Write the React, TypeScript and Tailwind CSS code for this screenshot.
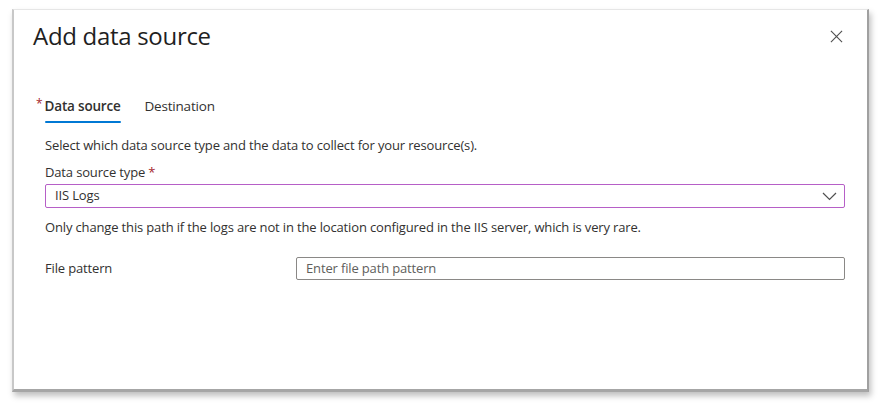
import React from "react";

export default function App() {
  const font = { fontFamily: '"Open Sans", "Noto Sans", sans-serif' };
  return (
    <div className="w-[882px] h-[408px] bg-white pt-[9px] pl-[12px]" style={font}>
      <div className="w-[857px] h-[383px] bg-white border-t border-t-[#e6e6e6] border-l-2 border-l-[#c8c8c8] border-r-2 border-r-[#a0a0a0] border-b-[3px] border-b-[#a6a6a6] shadow-[2px_4px_6px_rgba(0,0,0,0.25)] flex flex-col">
        <div className="flex items-start justify-between pl-[19px] pr-[24px] pt-[11px]">
          <h1 className="text-[24px] leading-[30px] text-[#1f1f1f] tracking-[-0.3px]">Add data source</h1>
          <button className="mt-[9px] text-[#505050]" title="Close">
            <svg width="13" height="13" viewBox="0 0 14 14" fill="none" stroke="currentColor" strokeWidth="1.2">
              <path d="M1 1L13 13M13 1L1 13" />
            </svg>
          </button>
        </div>

        <div className="flex items-end gap-[24px] pl-[22px] mt-[46px]">
          <div className="flex">
            <span className="text-[#a4262c] text-[12px] leading-[14px] mr-[2px]">*</span>
            <div className="flex flex-col">
              <span className="text-[13.5px] leading-[18px] font-semibold text-[#323130] tracking-[-0.2px]">Data source</span>
              <span className="mt-[6px] h-[2px] bg-[#0078d4] rounded-full" />
            </div>
          </div>
          <span className="text-[13.5px] leading-[18px] text-[#323130] mb-[8px] tracking-[-0.2px]">Destination</span>
        </div>

        <div className="pl-[31px] pr-[22px] text-[13px] text-[#323130] tracking-[-0.15px]">
          <p className="mt-[14px] leading-[16px]">Select which data source type and the data to collect for your resource(s).</p>
          <p className="mt-[11px] leading-[16px]">
            Data source type <span className="text-[#a4262c]">*</span>
          </p>
          <div className="mt-[4px] h-[24px] border border-[#b65fc7] rounded-[2px] flex items-center justify-between pl-[9px] pr-[7px]">
            <span>IIS Logs</span>
            <svg width="15" height="9" viewBox="0 0 15 9" fill="none" stroke="#505050" strokeWidth="1.2">
              <path d="M1 1L7.5 7.5L14 1" />
            </svg>
          </div>
          <p className="mt-[11px] leading-[16px]">
            Only change this path if the logs are not in the location configured in the IIS server, which is very rare.
          </p>
          <div className="mt-[22px] flex items-center">
            <span className="w-[251px]">File pattern</span>
            <div className="flex-1 h-[23px] border border-[#8a8886] rounded-[2px] flex items-center pl-[9px] text-[#605e5c]">
              Enter file path pattern
            </div>
          </div>
        </div>
      </div>
    </div>
  );
}
